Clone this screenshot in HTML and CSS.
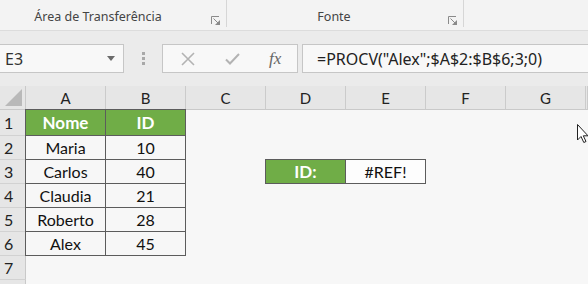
FILE: index.html
```html
<!DOCTYPE html>
<html lang="pt">
<head>
  <meta charset="UTF-8" />
  <title>PROCV</title>
  <link rel="stylesheet" href="styles.css">
</head>
<body>
  <!-- ribbon (bottom part) -->
  <div class="ribbon">
    <div class="group clip">
      <span class="label">Área de Transferência</span>
      <svg class="launcher" width="9" height="9" viewBox="0 0 9 9"><path d="M0.5 8V0.5H8" fill="none" stroke="#8a8a8a"/><path d="M2.5 2.5L7.5 7.5" stroke="#8a8a8a"/><path d="M9 4V9H4Z" fill="#8a8a8a"/></svg>
    </div>
    <div class="group fonte">
      <span class="label">Fonte</span>
      <svg class="launcher" width="9" height="9" viewBox="0 0 9 9"><path d="M0.5 8V0.5H8" fill="none" stroke="#8a8a8a"/><path d="M2.5 2.5L7.5 7.5" stroke="#8a8a8a"/><path d="M9 4V9H4Z" fill="#8a8a8a"/></svg>
    </div>
  </div>

  <!-- formula bar -->
  <div class="fbar">
    <div class="namebox">
      <span>E3</span>
      <svg width="8" height="5" viewBox="0 0 8 5"><path d="M0 0H8L4 5Z" fill="#6b6b6b"/></svg>
    </div>
    <div class="grip"><i></i><i></i><i></i></div>
    <div class="fxbox">
      <svg class="btn" width="14" height="14" viewBox="0 0 14 14"><path d="M1 1L13 13M13 1L1 13" stroke="#b3b3b3" stroke-width="1.6"/></svg>
      <svg class="btn" width="15" height="12" viewBox="0 0 15 12"><path d="M1 6.5L5 10.5L14 1" fill="none" stroke="#b3b3b3" stroke-width="2"/></svg>
      <span class="fx">fx</span>
    </div>
    <div class="formula">=PROCV("Alex";$A$2:$B$6;3;0)</div>
  </div>

  <!-- sheet -->
  <div class="sheet">
    <div class="corner"><svg width="17" height="17" viewBox="0 0 17 17"><path d="M17 0V17H0Z" fill="#b9b9b9"/></svg></div>
    <div class="colhead">A</div><div class="colhead">B</div><div class="colhead">C</div><div class="colhead">D</div>
    <div class="colhead">E</div><div class="colhead">F</div><div class="colhead">G</div><div class="colhead"></div>

    <div class="rowhead">1</div>
    <div class="cell head top left">Nome</div><div class="cell head top">ID</div>
    <div class="cell"></div><div class="cell"></div><div class="cell"></div><div class="cell"></div><div class="cell"></div><div class="cell"></div>

    <div class="rowhead">2</div>
    <div class="cell data left">Maria</div><div class="cell data">10</div>
    <div class="cell"></div><div class="cell"></div><div class="cell"></div><div class="cell"></div><div class="cell"></div><div class="cell"></div>

    <div class="rowhead">3</div>
    <div class="cell data left">Carlos</div><div class="cell data">40</div>
    <div class="cell"></div>
    <div class="cell head top left">ID:</div><div class="cell data top result">#REF!</div>
    <div class="cell"></div><div class="cell"></div><div class="cell"></div>

    <div class="rowhead">4</div>
    <div class="cell data left">Claudia</div><div class="cell data">21</div>
    <div class="cell"></div><div class="cell"></div><div class="cell"></div><div class="cell"></div><div class="cell"></div><div class="cell"></div>

    <div class="rowhead">5</div>
    <div class="cell data left">Roberto</div><div class="cell data">28</div>
    <div class="cell"></div><div class="cell"></div><div class="cell"></div><div class="cell"></div><div class="cell"></div><div class="cell"></div>

    <div class="rowhead">6</div>
    <div class="cell data left">Alex</div><div class="cell data">45</div>
    <div class="cell"></div><div class="cell"></div><div class="cell"></div><div class="cell"></div><div class="cell"></div><div class="cell"></div>

    <div class="rowhead">7</div>
    <div class="cell"></div><div class="cell"></div><div class="cell"></div><div class="cell"></div><div class="cell"></div><div class="cell"></div><div class="cell"></div><div class="cell"></div>

    <div class="rowhead"></div>
    <div class="cell"></div><div class="cell"></div><div class="cell"></div><div class="cell"></div><div class="cell"></div><div class="cell"></div><div class="cell"></div><div class="cell"></div>

    <!-- mouse pointer over the sheet -->
    <svg class="pointer" width="12" height="20" viewBox="0 0 12 20"><path d="M0.5 0.5V16L4 12.5L6.8 18.5L9 17.5L6.3 11.8H11Z" fill="#fff" stroke="#222" stroke-linejoin="round"/></svg>
  </div>
</body>
</html>
```

FILE: styles.css
```css
body {
  margin: 0;
  background-color: #ebebeb;
  font-family: 'Noto Sans', sans-serif;
  color: #222;
  overflow: hidden;
}

/* ribbon */
.ribbon {
  display: flex;
  height: 30px;
  background-color: #f3f3f3;
  border-bottom: 1px solid #dcdcdc;
}

.group {
  display: flex;
  align-items: flex-end;
  justify-content: center;
  position: relative;
  height: 27px;
  border-right: 1px solid #d6d6d6;
  box-sizing: border-box;
}

.group.clip { width: 227px; }
.group.fonte { width: 237px; }

.group .label {
  font-size: 12.5px;
  line-height: 16px;
  color: #444;
  margin-bottom: 2px;
}

.group.clip .label { margin-right: 30px; }
.group.fonte .label { margin-right: 22px; }

.launcher {
  position: absolute;
  right: 6px;
  bottom: 2px;
}

/* formula bar */
.fbar {
  display: flex;
  align-items: stretch;
  height: 29px;
  margin-top: 13px;
}

.namebox {
  width: 124px;
  box-sizing: border-box;
  display: flex;
  align-items: center;
  justify-content: space-between;
  padding: 0 8px 0 5px;
  background-color: #f8f8f8;
  border: 1px solid #c6c6c6;
  border-left: none;
  font-size: 16px;
  color: #333;
}

.grip {
  width: 38px;
  display: flex;
  flex-direction: column;
  align-items: center;
  justify-content: center;
  gap: 2px;
}

.grip i {
  width: 3px;
  height: 3px;
  background-color: #a8a8a8;
}

.fxbox {
  width: 136px;
  box-sizing: border-box;
  display: flex;
  align-items: center;
  background-color: #f8f8f8;
  border: 1px solid #c6c6c6;
  padding-left: 18px;
}

.fxbox .btn:first-child { margin-right: 30px; }
.fxbox .btn:nth-child(2) { margin-right: 29px; }

.fx {
  font-family: 'Liberation Serif', serif;
  font-style: italic;
  font-size: 17px;
  color: #666;
}

.formula {
  flex: 1;
  margin-left: 4px;
  padding-left: 14px;
  background-color: #f8f8f8;
  border: 1px solid #c6c6c6;
  border-right: none;
  display: flex;
  align-items: center;
  font-size: 16px;
  color: #222;
}

/* sheet grid */
.sheet {
  position: relative;
  margin-top: 13px;
  display: grid;
  grid-template-columns: 26px repeat(7, 80px) 1fr;
  grid-template-rows: 24px 26px repeat(6, 24px) 10px;
  background-color: #f7f7f7;
  font-family: 'Lato', sans-serif;
}

.corner {
  background-color: #e6e6e6;
  border-right: 1px solid #c9c9c9;
  border-bottom: 1px solid #c9c9c9;
  display: flex;
  align-items: flex-end;
  justify-content: flex-end;
  padding: 0 3px 3px 0;
}

.colhead {
  background-color: #e6e6e6;
  border-right: 1px solid #cbcbcb;
  border-bottom: 1px solid #c9c9c9;
  display: flex;
  align-items: center;
  justify-content: center;
  font-size: 15px;
  color: #222;
}

.rowhead {
  background-color: #e6e6e6;
  border-right: 1px solid #c9c9c9;
  border-bottom: 1px solid #d2d2d2;
  display: flex;
  align-items: center;
  padding-left: 4px;
  font-size: 16px;
  color: #222;
}

.cell {
  display: flex;
  align-items: center;
  justify-content: center;
  font-size: 16px;
  color: #111;
}

.cell.head,
.cell.data {
  border-right: 1px solid #5c5c5c;
  border-bottom: 1px solid #5c5c5c;
}

.cell.left { border-left: 1px solid #5c5c5c; margin-left: -1px; }
.cell.top { border-top: 1px solid #5c5c5c; margin-top: -1px; }

.cell.head {
  background-color: #70ad47;
  color: #fff;
  font-weight: bold;
  font-size: 17px;
}

.cell.result { background-color: #fdfdfd; }

.pointer {
  position: absolute;
  left: 577px;
  top: 38px;
}
```
